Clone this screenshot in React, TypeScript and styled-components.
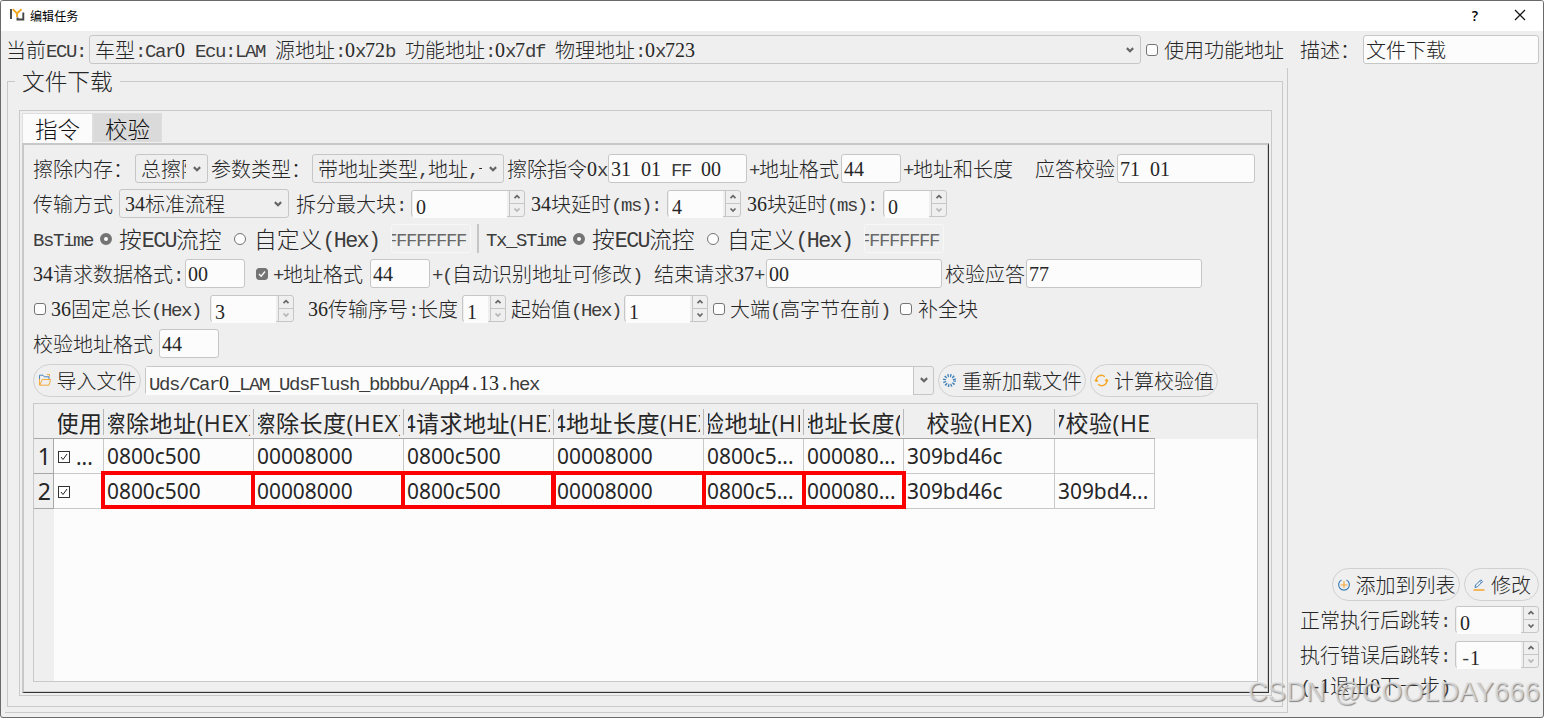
import type { ReactNode } from "react";
import styled, { createGlobalStyle, css } from "styled-components";

const GlobalStyle = createGlobalStyle`
    * {
        box-sizing: border-box;
    }
    body {
        margin: 0;
        background: #efefef;
        overflow: hidden;
    }
`;

const Window = styled.div`
    position: relative;
    width: 1544px;
    height: 718px;
    display: flex;
    flex-direction: column;
    background: #efefef;
    border: 1px solid #6a6a6a;
    border-radius: 3px;
    color: #262626;
    font-family: "Noto Sans CJK SC", sans-serif;
    font-weight: 300;
    font-size: 20px;
    overflow: hidden;
`;

const TitleBar = styled.div`
    display: flex;
    align-items: center;
    height: 30px;
    flex: none;
    padding: 0 17px 2px 9px;
    background: #ffffff;
    color: #000;
    font-size: 12px;
    font-weight: 400;
`;

const Title = styled.span`
    flex: 1;
    margin-left: 5px;
    letter-spacing: 0.1px;
`;

const HelpMark = styled.span`
    font-family: "Open Sans", sans-serif;
    font-size: 14px;
    font-weight: 600;
    margin-right: 36px;
`;

const Row = styled.div<{ $h?: number }>`
    display: flex;
    align-items: center;
    flex: none;
    height: ${(p) => p.$h ?? 35}px;
`;

const Label = styled.span<{ $w: number; $ml?: number; $big?: boolean }>`
    flex: none;
    width: ${(p) => p.$w}px;
    margin-left: ${(p) => p.$ml ?? 0}px;
    font-size: ${(p) => (p.$big ? 22.8 : 20)}px;
    line-height: 29px;
    white-space: pre;
`;

const Run = styled.span`
    line-height: 27px;
`;

const Latin = styled.span`
    font-family: "Liberation Mono", monospace;
    font-size: 0.95em;
    letter-spacing: -0.0738em;
    line-height: 0;
    vertical-align: 1px;
    color: #3c3c3c;
`;

const Digits = styled.span`
    font-family: "Liberation Serif", serif;
    line-height: 0;
    vertical-align: 1px;
`;

const Field = styled.div<{ $w: number; $ml?: number; $disabled?: boolean }>`
    flex: none;
    display: flex;
    align-items: center;
    width: ${(p) => p.$w}px;
    height: 29px;
    margin-left: ${(p) => p.$ml ?? 0}px;
    padding-left: 2px;
    background: #fcfcfc;
    border: 1px solid #c6c6c6;
    border-radius: 3px;
    white-space: pre;
    overflow: hidden;
    ${(p) =>
        p.$disabled &&
        css`
            justify-content: flex-end;
            padding: 0 4px 0 0;
            background: #efefef;
            border: 1px solid #fafafa;
            opacity: 0.75;
        `}
`;

const ComboBox = styled.div<{ $w: number; $ml?: number }>`
    flex: none;
    display: flex;
    align-items: center;
    justify-content: space-between;
    width: ${(p) => p.$w}px;
    height: 29px;
    margin-left: ${(p) => p.$ml ?? 0}px;
    padding: 0 5px;
    border: 1px solid #c6c6c6;
    border-radius: 3px;
`;

const ComboText = styled.span`
    flex: 1;
    min-width: 0;
    margin-right: 6px;
    line-height: 27px;
    white-space: pre;
    overflow: hidden;
`;

const SpinFrame = styled.div<{ $w: number; $ml?: number }>`
    flex: none;
    display: flex;
    width: ${(p) => p.$w}px;
    height: 27px;
    margin-left: ${(p) => p.$ml ?? 0}px;
    border: 1px solid #c6c6c6;
    border-radius: 3px;
`;

const SpinValue = styled.div`
    flex: 1;
    height: 27px;
    margin: 0 2px 0 1px;
    padding: 2px 0 0 3px;
    line-height: 27px;
    background: #fcfcfc;
`;

const SpinButtons = styled.div`
    width: 15px;
    border-left: 1px solid #c6c6c6;
    display: flex;
    flex-direction: column;
`;

const SpinButton = styled.div`
    flex: 1;
    display: flex;
    align-items: center;
    justify-content: center;
    & + & {
        border-top: 1px solid #c6c6c6;
    }
`;

const Check = styled.span<{ $ml?: number; $on?: boolean }>`
    flex: none;
    display: flex;
    align-items: center;
    justify-content: center;
    width: 12px;
    height: 12px;
    margin-left: ${(p) => p.$ml ?? 0}px;
    border: 1px solid #747474;
    border-radius: 3px;
    background: ${(p) => (p.$on ? "#747474" : "#fdfdfd")};
`;

const Radio = styled.span<{ $ml?: number; $on?: boolean }>`
    flex: none;
    width: 12px;
    height: 12px;
    margin-left: ${(p) => p.$ml ?? 0}px;
    border: ${(p) => (p.$on ? 4 : 1)}px solid #747474;
    border-radius: 50%;
    background: #fdfdfd;
`;

const Separator = styled.span`
    flex: none;
    width: 2px;
    height: 29px;
    margin-left: 6px;
    background: #c6c6c6;
`;

const PillButton = styled.div<{ $w: number; $ml?: number }>`
    flex: none;
    display: flex;
    align-items: center;
    justify-content: center;
    width: ${(p) => p.$w}px;
    height: 33px;
    margin-left: ${(p) => p.$ml ?? 0}px;
    border: 1px solid #d0d0d0;
    border-radius: 17px;
    white-space: pre;
    svg {
        flex: none;
        margin-right: 5px;
    }
`;

const FileCombo = styled.div`
    flex: none;
    display: flex;
    width: 789px;
    height: 29px;
    margin-left: 4px;
    border: 1px solid #c6c6c6;
    border-radius: 3px;
`;

const FilePath = styled.div`
    flex: 1;
    padding: 2px 0 0 3px;
    line-height: 27px;
    height: 28px;
    background: #fcfcfc;
    white-space: pre;
`;

const FileArrow = styled.div`
    width: 20px;
    display: flex;
    align-items: center;
    justify-content: center;
    border-left: 1px solid #c6c6c6;
`;

const Main = styled.div`
    flex: 1;
    display: flex;
    min-height: 0;
`;

const LeftFrame = styled.div`
    width: 1283px;
    height: 645px;
    margin-left: 4px;
    padding: 0 4px 5px 2px;
    border-right: 1px solid #c9c9c9;
    border-bottom: 1px solid #c9c9c9;
`;

const GroupBox = styled.fieldset`
    margin: 0;
    width: 1276px;
    height: 639px;
    padding: 0 0 0 11px;
    border: 1px solid #c9c9c9;
`;

const Legend = styled.legend`
    margin-left: -4px;
    padding: 0 7px;
    height: 26px;
    font-size: 22.7px;
    line-height: 25px;
`;

const TabWidget = styled.div`
    width: 1253px;
    height: 586px;
    margin-top: 16px;
    padding: 2px 2px 2px 2px;
    border: 1px solid #c9c9c9;
`;

const TabBar = styled.div`
    display: flex;
    align-items: flex-start;
    height: 30px;
`;

const Tab = styled.div<{ $w: number; $active?: boolean }>`
    width: ${(p) => p.$w}px;
    height: ${(p) => (p.$active ? 30 : 29)}px;
    line-height: ${(p) => (p.$active ? 28 : 29)}px;
    text-align: center;
    font-size: 22.5px;
    color: #111;
    background: ${(p) => (p.$active ? "#fbfbfb" : "#dadada")};
    border: 1px solid #dedede;
    border-bottom: 0;
`;

const TabPane = styled.div`
    width: 1247px;
    height: 550px;
    padding: 6px 9px 0 9px;
    border-top: 2px solid #c8c8c8;
    border-left: 2px solid #c8c8c8;
    border-right: 1px solid #333;
    border-bottom: 1px solid #333;
    box-shadow: inset -1px -1px 0 #cfcfcf;
`;

const Table = styled.div`
    position: relative;
    width: 1225px;
    height: 279px;
    margin-top: 4px;
    border: 1px solid #c9c9c9;
    background: linear-gradient(to right, #efefef 20px, #fcfcfc 20px);
    font-family: "Noto Sans", "Noto Sans CJK SC", sans-serif;
    font-weight: 400;
`;

const columns = "20px 50px 150px 150px 150px 150px 100px 100px 151px 100px";

const HeaderRow = styled.div`
    display: grid;
    grid-template-columns: ${columns};
    align-items: center;
    height: 35px;
    background: linear-gradient(to right, #a8a8a8 1121px, #efefef 1121px) bottom / 100% 1px no-repeat #efefef;
`;

const HeaderCell = styled.div<{ $last?: boolean }>`
    display: flex;
    justify-content: center;
    height: 26px;
    padding: 0 3px 0 4px;
    border-right: 1px solid ${(p) => (p.$last ? "transparent" : "#b8b8b8")};
`;

const HeaderClip = styled.div`
    display: flex;
    justify-content: center;
    align-items: center;
    width: 100%;
    height: 30px;
    margin-top: -2px;
    font-size: 23px;
    letter-spacing: 0.5px;
    font-family: "Open Sans", "Noto Sans CJK SC", sans-serif;
    white-space: pre;
    overflow: hidden;
    span {
        flex: none;
    }
`;

const BodyRow = styled.div`
    display: grid;
    grid-template-columns: ${columns};
    height: 35px;
`;

const Cell = styled.div`
    padding: 0 4px 0 3px;
    line-height: 34px;
    font-size: 20.9px;
    border-right: 1px solid #c9c9c9;
    border-bottom: 1px solid #c9c9c9;
    white-space: pre;
    overflow: hidden;
`;

const IndexCell = styled(Cell)`
    padding: 0 2px 0 0;
    text-align: right;
    font-size: 23px;
    line-height: 35px;
    background: #efefef;
    border-color: #a8a8a8;
`;

const CheckCell = styled(Cell)`
    display: flex;
    align-items: center;
    gap: 6px;
    padding-left: 4px;
    padding-top: 1px;
`;

const TableCheck = styled.span`
    flex: none;
    display: flex;
    width: 12px;
    height: 12px;
    border: 1px solid #333;
    background: #fff;
`;

/* marker drawn over the cells of the second row */
const RedMarks = styled.div`
    position: absolute;
    left: 67px;
    top: 67px;
    display: grid;
    grid-template-columns: 154px 154px 154px 154px 104px 104px;
    height: 38px;
`;

const RedBox = styled.div<{ $shift: number }>`
    margin-left: ${(p) => -p.$shift}px;
    margin-right: ${(p) => p.$shift}px;
    border: 4px solid #fc0000;
`;

const Side = styled.div`
    flex: 1;
    display: flex;
    flex-direction: column;
    justify-content: flex-end;
    padding: 0 4px 18px 12px;
`;

const Watermark = styled.div`
    position: absolute;
    left: 1247px;
    top: 675px;
    font-family: "Liberation Sans", sans-serif;
    font-size: 27px;
    font-weight: 400;
    line-height: 32px;
    letter-spacing: 0.35px;
    white-space: pre;
    color: rgba(226, 226, 226, 0.75);
    text-shadow: 1px 1px 1px rgba(110, 110, 110, 0.8);
`;

/* latin runs take half the width of a chinese character */
function T({ children }: { children: string }) {
    const runs = children.split(/([0-9]+|[\x20-\x2f\x3a-\x7e]+)/).filter(Boolean);
    return (
        <Run>
            {runs.map((run, i) => {
                if (/^[0-9]/.test(run)) return <Digits key={i}>{run}</Digits>;
                if (/^[\x20-\x7e]/.test(run)) return <Latin key={i}>{run}</Latin>;
                return run;
            })}
        </Run>
    );
}

function Arrow({ up, small, faint }: { up?: boolean; small?: boolean; faint?: boolean }) {
    return (
        <svg width={small ? 8 : 10} height={small ? 6 : 8} viewBox="0 0 8 6">
            <path
                d={up ? "M1.5 4.2 L4 1.7 L6.5 4.2" : "M1.5 1.5 L4 4 L6.5 1.5"}
                fill="none"
                stroke={faint ? "#b5b5b5" : "#666"}
                strokeWidth="1.7"
            />
        </svg>
    );
}

function Combo({ w, ml, children }: { w: number; ml?: number; children: string }) {
    return (
        <ComboBox $w={w} $ml={ml}>
            <ComboText>
                <T>{children}</T>
            </ComboText>
            <Arrow />
        </ComboBox>
    );
}

function Spin({ w, ml, value, faint = true }: { w: number; ml?: number; value: string; faint?: boolean }) {
    return (
        <SpinFrame $w={w} $ml={ml}>
            <SpinValue>
                <T>{value}</T>
            </SpinValue>
            <SpinButtons>
                <SpinButton>
                    <Arrow small up />
                </SpinButton>
                <SpinButton>
                    <Arrow small faint={faint} />
                </SpinButton>
            </SpinButtons>
        </SpinFrame>
    );
}

function Pill({ w, ml, icon, children }: { w: number; ml?: number; icon: ReactNode; children: string }) {
    return (
        <PillButton $w={w} $ml={ml}>
            {icon}
            <T>{children}</T>
        </PillButton>
    );
}

const FolderIcon = () => (
    <svg width="14" height="14" viewBox="0 0 14 14" fill="none">
        <path d="M1.5 6V2.2H5L6.3 3.8H11V6" stroke="#4a86bd" />
        <path d="M1.5 6V12.2H11L12.5 6.5H4.2L2 12" stroke="#f3ab3c" />
        <path d="M9 1.5H11.5V3.5" stroke="#f3ab3c" />
    </svg>
);

const LoadIcon = () => (
    <svg width="15" height="15" viewBox="0 0 15 15">
        <circle cx="7.5" cy="7.5" r="5" fill="none" stroke="#3f80b9" strokeWidth="3" strokeDasharray="1.3 1.318" />
    </svg>
);

const RefreshIcon = () => (
    <svg width="15" height="15" viewBox="0 0 15 15" fill="none" stroke="#f5a623" strokeWidth="1.4">
        <path d="M2.3 8A5 5 0 0 1 10.8 3.8M12.7 7A5 5 0 0 1 4.2 11.2" />
        <path d="M1 6.8L2.3 8.3L4 7.4M14 8.2L12.7 6.7L11 7.6" />
    </svg>
);

const AddIcon = () => (
    <svg width="14" height="14" viewBox="0 0 14 14" fill="none">
        <path d="M4.5 2A5.4 5.4 0 1 0 9.5 2" stroke="#4280b8" strokeWidth="1.2" />
        <path d="M7 3V10M3.5 7H10.5" stroke="#f3ab3c" strokeWidth="1.2" />
    </svg>
);

const EditIcon = () => (
    <svg width="14" height="14" viewBox="0 0 14 14" fill="none">
        <path d="M3 9.5L3.6 7L8.8 1.8L10.6 3.6L5.4 8.8Z M7.6 3L9.4 4.8" stroke="#4280b8" />
        <path d="M1.5 12H12.5" stroke="#f3ab3c" strokeWidth="1.6" />
    </svg>
);

const headers = [
    "使用",
    "擦除地址(HEX)",
    "擦除长度(HEX)",
    "34请求地址(HEX)",
    "34地址长度(HEX)",
    "校验地址(HEX)",
    "校验地址长度(HEX)",
    "校验(HEX)",
    "37校验(HEX)",
];

const rows = [
    { more: "...", cells: ["0800c500", "00008000", "0800c500", "00008000", "0800c5...", "000080...", "309bd46c", ""] },
    { more: "", cells: ["0800c500", "00008000", "0800c500", "00008000", "0800c5...", "000080...", "309bd46c", "309bd4..."] },
];

export default function App() {
    return (
        <>
            <GlobalStyle />
            <Window>
                <TitleBar>
                    <svg width="15" height="14" viewBox="0 0 15 14" fill="none" strokeWidth="1.9">
                        <path d="M1 1V11" stroke="#444" />
                        <path d="M2.8 1.2L7 5.5L11.5 1.2M7 5V9" stroke="#f2a51f" />
                        <path d="M13.3 4.5V11.5H7.5V9.5" stroke="#444" />
                    </svg>
                    <Title>编辑任务</Title>
                    <HelpMark>?</HelpMark>
                    <svg width="12" height="12" viewBox="0 0 12 12">
                        <path d="M1 1L11 11M11 1L1 11" stroke="#111" strokeWidth="1.2" />
                    </svg>
                </TitleBar>
                <Row $h={37}>
                    <Label $w={83} $ml={5}><T>当前ECU:</T></Label>
                    <Combo w={1052}>车型:Car0 Ecu:LAM 源地址:0x72b 功能地址:0x7df 物理地址:0x723</Combo>
                    <Check $ml={5} />
                    <Label $w={136} $ml={6}>使用功能地址</Label>
                    <Label $w={63}>描述：</Label>
                    <Field $w={176}><T>文件下载</T></Field>
                </Row>
                <Main>
                    <LeftFrame>
                        <GroupBox>
                            <Legend>文件下载</Legend>
                            <TabWidget>
                                <TabBar>
                                    <Tab $w={71} $active>指令</Tab>
                                    <Tab $w={69}>校验</Tab>
                                </TabBar>
                                <TabPane>
                                    <Row>
                                        <Label $w={102}>擦除内存：</Label>
                                        <Combo w={73}>总擦除</Combo>
                                        <Label $w={101} $ml={3}>参数类型：</Label>
                                        <Combo w={192}>带地址类型,地址,长度</Combo>
                                        <Label $w={101} $ml={3}><T>擦除指令0x</T></Label>
                                        <Field $w={139}><T>31 01 FF 00</T></Field>
                                        <Label $w={92} $ml={2}><T>+地址格式</T></Label>
                                        <Field $w={60}><T>44</T></Field>
                                        <Label $w={132} $ml={2}><T>+地址和长度</T></Label>
                                        <Label $w={82}>应答校验</Label>
                                        <Field $w={138}><T>71 01</T></Field>
                                    </Row>
                                    <Row>
                                        <Label $w={86}>传输方式</Label>
                                        <Combo w={170}>34标准流程</Combo>
                                        <Label $w={115} $ml={7}><T>拆分最大块:</T></Label>
                                        <Spin w={114} value="0" />
                                        <Label $w={136} $ml={6}><T>34块延时(ms):</T></Label>
                                        <Spin w={74} value="4" faint={false} />
                                        <Label $w={136} $ml={6}><T>36块延时(ms):</T></Label>
                                        <Spin w={64} value="0" />
                                    </Row>
                                    <Row>
                                        <Label $w={67}><T>BsTime</T></Label>
                                        <Radio $on />
                                        <Label $w={109} $ml={7} $big><T>按ECU流控</T></Label>
                                        <Radio $ml={6} />
                                        <Label $w={137} $ml={8} $big><T>自定义(Hex)</T></Label>
                                        <Field $w={80} $disabled><T>FFFFFFFF</T></Field>
                                        <Separator />
                                        <Label $w={87} $ml={7}><T>Tx_STime</T></Label>
                                        <Radio $on />
                                        <Label $w={109} $ml={7} $big><T>按ECU流控</T></Label>
                                        <Radio $ml={6} />
                                        <Label $w={137} $ml={8} $big><T>自定义(Hex)</T></Label>
                                        <Field $w={80} $disabled><T>FFFFFFFF</T></Field>
                                    </Row>
                                    <Row>
                                        <Label $w={152}><T>34请求数据格式:</T></Label>
                                        <Field $w={60}><T>00</T></Field>
                                        <Check $ml={11} $on>
                                            <svg width="10" height="10" viewBox="0 0 10 10">
                                                <path d="M2 5L4.2 7.2L8 2.5" fill="none" stroke="#fff" strokeWidth="1.3" />
                                            </svg>
                                        </Check>
                                        <Label $w={97} $ml={5}><T>+地址格式</T></Label>
                                        <Field $w={60}><T>44</T></Field>
                                        <Label $w={222} $ml={2}><T>+(自动识别地址可修改)</T></Label>
                                        <Label $w={112}><T>结束请求37+</T></Label>
                                        <Field $w={176}><T>00</T></Field>
                                        <Label $w={81} $ml={3}>校验应答</Label>
                                        <Field $w={176}><T>77</T></Field>
                                    </Row>
                                    <Row>
                                        <Check $ml={1} />
                                        <Label $w={159} $ml={5}><T>36固定总长(Hex)</T></Label>
                                        <Spin w={84} value="3" />
                                        <Label $w={154} $ml={14}><T>36传输序号:长度</T></Label>
                                        <Spin w={44} value="1" />
                                        <Label $w={113} $ml={5}><T>起始值(Hex)</T></Label>
                                        <Spin w={84} value="1" faint={false} />
                                        <Check $ml={5} />
                                        <Label $w={170} $ml={5}><T>大端(高字节在前)</T></Label>
                                        <Check />
                                        <Label $w={70} $ml={6}>补全块</Label>
                                    </Row>
                                    <Row>
                                        <Label $w={126}>校验地址格式</Label>
                                        <Field $w={60}><T>44</T></Field>
                                    </Row>
                                    <Row $h={38}>
                                        <Pill w={108} icon={<FolderIcon />}>导入文件</Pill>
                                        <FileCombo>
                                            <FilePath><T>Uds/Car0_LAM_UdsFlush_bbbbu/App4.13.hex</T></FilePath>
                                            <FileArrow><Arrow /></FileArrow>
                                        </FileCombo>
                                        <Pill w={148} ml={4} icon={<LoadIcon />}>重新加载文件</Pill>
                                        <Pill w={128} ml={4} icon={<RefreshIcon />}>计算校验值</Pill>
                                    </Row>
                                    <Table>
                                        <HeaderRow>
                                            <span />
                                            {headers.map((h, i) => (
                                                <HeaderCell key={h} $last={i === headers.length - 1}>
                                                    <HeaderClip><span>{h}</span></HeaderClip>
                                                </HeaderCell>
                                            ))}
                                        </HeaderRow>
                                        {rows.map((row, i) => (
                                            <BodyRow key={i}>
                                                <IndexCell>{i + 1}</IndexCell>
                                                <CheckCell>
                                                    <TableCheck>
                                                        <svg width="10" height="10" viewBox="0 0 10 10">
                                                            <path d="M2 5L4 7.5L8 2" fill="none" stroke="#222" />
                                                        </svg>
                                                    </TableCheck>
                                                    {row.more}
                                                </CheckCell>
                                                {row.cells.map((c, j) => (
                                                    <Cell key={j}>{c}</Cell>
                                                ))}
                                            </BodyRow>
                                        ))}
                                        <RedMarks>
                                            {[0, 4, 8, 11, 15, 19].map((s) => (
                                                <RedBox key={s} $shift={s} />
                                            ))}
                                        </RedMarks>
                                    </Table>
                                </TabPane>
                            </TabWidget>
                        </GroupBox>
                    </LeftFrame>
                    <Side>
                        <Row>
                            <Pill w={128} ml={32} icon={<AddIcon />}>添加到列表</Pill>
                            <Pill w={75} ml={4} icon={<EditIcon />}>修改</Pill>
                        </Row>
                        <Row>
                            <Label $w={155}><T>正常执行后跳转:</T></Label>
                            <Spin w={84} value="0" faint={false} />
                        </Row>
                        <Row>
                            <Label $w={155}><T>执行错误后跳转:</T></Label>
                            <Spin w={84} value="-1" />
                        </Row>
                        <Row $h={27}>
                            <Label $w={155}><T>(-1退出0下一步)</T></Label>
                        </Row>
                    </Side>
                </Main>
                <Watermark>CSDN @COOLDAY666</Watermark>
            </Window>
        </>
    );
}
